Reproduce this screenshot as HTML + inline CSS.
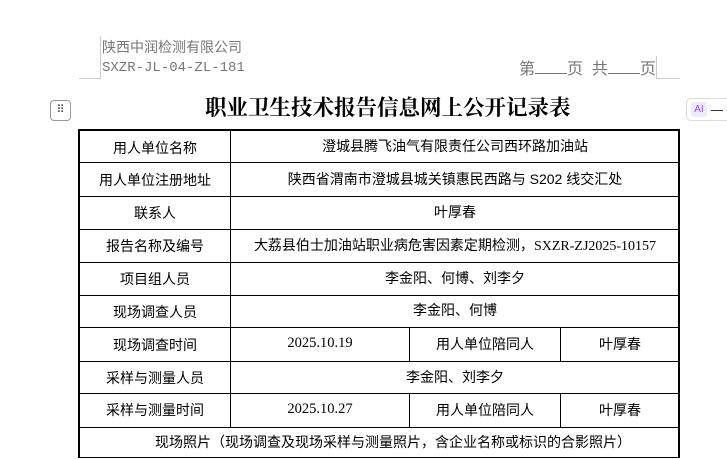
<!DOCTYPE html><html><head><meta charset="utf-8"><style>
body{margin:0;width:727px;height:459px;background:#fff;position:relative;overflow:hidden;font-family:"Liberation Sans","Noto Sans CJK SC",sans-serif;}
.a{position:absolute}
.h{position:absolute;height:1px;background:#000}
.v{position:absolute;width:1px;background:#000}
.t{position:absolute;font-size:14px;color:#000;text-align:center;white-space:nowrap;line-height:20px}
.s{font-family:"Liberation Serif","Noto Serif CJK SC",serif}
</style></head><body>
<div class="a" style="left:102px;top:38px;font-size:14px;color:#777;line-height:18px">陕西中润检测有限公司</div>
<div class="a" style="left:102px;top:59px;font-size:14px;color:#777;font-family:'Liberation Mono',monospace;line-height:18px">SXZR-JL-04-ZL-181</div>
<div class="a" style="left:100px;top:36px;width:1px;height:42px;background:#ccc"></div>
<div class="a" style="left:79px;top:78px;width:22px;height:1px;background:#ccc"></div>
<div class="a" style="left:519px;top:57px;font-size:16px;color:#777;line-height:22px">第<span style="display:inline-block;width:32px;border-bottom:1px solid #777;height:16px"></span>页&nbsp;&nbsp;共<span style="display:inline-block;width:32px;border-bottom:1px solid #777;height:16px"></span>页</div>
<div class="a" style="left:656px;top:56px;width:1px;height:22px;background:#ccc"></div>
<div class="a" style="left:656px;top:78px;width:24px;height:1px;background:#ccc"></div>
<div class="a" style="left:50px;top:100px;width:21px;height:21px;border:1px solid #999;border-radius:4px;box-sizing:border-box;font-size:11px;text-align:center;line-height:19px;color:#444">⠿</div>
<div class="a s" style="left:205px;top:95px;font-size:21.5px;font-weight:bold;line-height:26px;white-space:nowrap">职业卫生技术报告信息网上公开记录表</div>
<div class="a" style="left:686px;top:98px;width:50px;height:23px;border:1px solid #ddd;border-radius:5px;box-sizing:border-box"></div>
<div class="a" style="left:691px;top:102px;width:16px;height:15px;background:#f1eaff;border-radius:3px;color:#8a4dff;font-size:10px;text-align:center;line-height:15px">AI</div>
<div class="a" style="left:711px;top:110px;width:12px;height:1px;background:#333"></div>
<div class="a" style="left:78px;top:129px;width:602px;height:329px;border:2px solid #000;border-bottom:1px solid #000;box-sizing:border-box"></div>
<div class="h" style="left:78px;width:602px;top:162px"></div>
<div class="h" style="left:78px;width:602px;top:196px"></div>
<div class="h" style="left:78px;width:602px;top:229px"></div>
<div class="h" style="left:78px;width:602px;top:262px"></div>
<div class="h" style="left:78px;width:602px;top:295px"></div>
<div class="h" style="left:78px;width:602px;top:327px"></div>
<div class="h" style="left:78px;width:602px;top:361px"></div>
<div class="h" style="left:78px;width:602px;top:393px"></div>
<div class="h" style="left:78px;width:602px;top:427px"></div>
<div class="v" style="left:230px;top:129px;height:298px"></div>
<div class="v" style="left:409px;top:327px;height:34px"></div>
<div class="v" style="left:560px;top:327px;height:34px"></div>
<div class="v" style="left:409px;top:393px;height:34px"></div>
<div class="v" style="left:560px;top:393px;height:34px"></div>
<div class="t" style="left:80px;width:150px;top:138px">用人单位名称</div>
<div class="t" style="left:231px;width:448px;top:136px">澄城县腾飞油气有限责任公司西环路加油站</div>
<div class="t" style="left:80px;width:150px;top:170px">用人单位注册地址</div>
<div class="t" style="left:231px;width:448px;top:169px">陕西省渭南市澄城县城关镇惠民西路与 S202 线交汇处</div>
<div class="t" style="left:80px;width:150px;top:203px">联系人</div>
<div class="t" style="left:231px;width:448px;top:202px">叶厚春</div>
<div class="t" style="left:80px;width:150px;top:236px">报告名称及编号</div>
<div class="t" style="left:231px;width:448px;top:235px">大荔县伯士加油站职业病危害因素定期检测，<span class="s">SXZR-ZJ2025-10157</span></div>
<div class="t" style="left:80px;width:150px;top:269px">项目组人员</div>
<div class="t" style="left:231px;width:448px;top:268px">李金阳、何博、刘李夕</div>
<div class="t" style="left:80px;width:150px;top:302px">现场调查人员</div>
<div class="t" style="left:231px;width:448px;top:300px">李金阳、何博</div>
<div class="t" style="left:80px;width:150px;top:335px">现场调查时间</div>
<div class="t s" style="left:231px;width:178px;top:333px;font-size:14.5px">2025.10.19</div>
<div class="t" style="left:410px;width:150px;top:334px">用人单位陪同人</div>
<div class="t" style="left:561px;width:118px;top:334px">叶厚春</div>
<div class="t" style="left:80px;width:150px;top:368px">采样与测量人员</div>
<div class="t" style="left:231px;width:448px;top:367px">李金阳、刘李夕</div>
<div class="t" style="left:80px;width:150px;top:400px">采样与测量时间</div>
<div class="t s" style="left:231px;width:178px;top:399px;font-size:14.5px">2025.10.27</div>
<div class="t" style="left:410px;width:150px;top:400px">用人单位陪同人</div>
<div class="t" style="left:561px;width:118px;top:400px">叶厚春</div>
<div class="t" style="left:155px;top:432px;text-align:left">现场照片（现场调查及现场采样与测量照片，含企业名称或标识的合影照片）</div>
</body></html>
